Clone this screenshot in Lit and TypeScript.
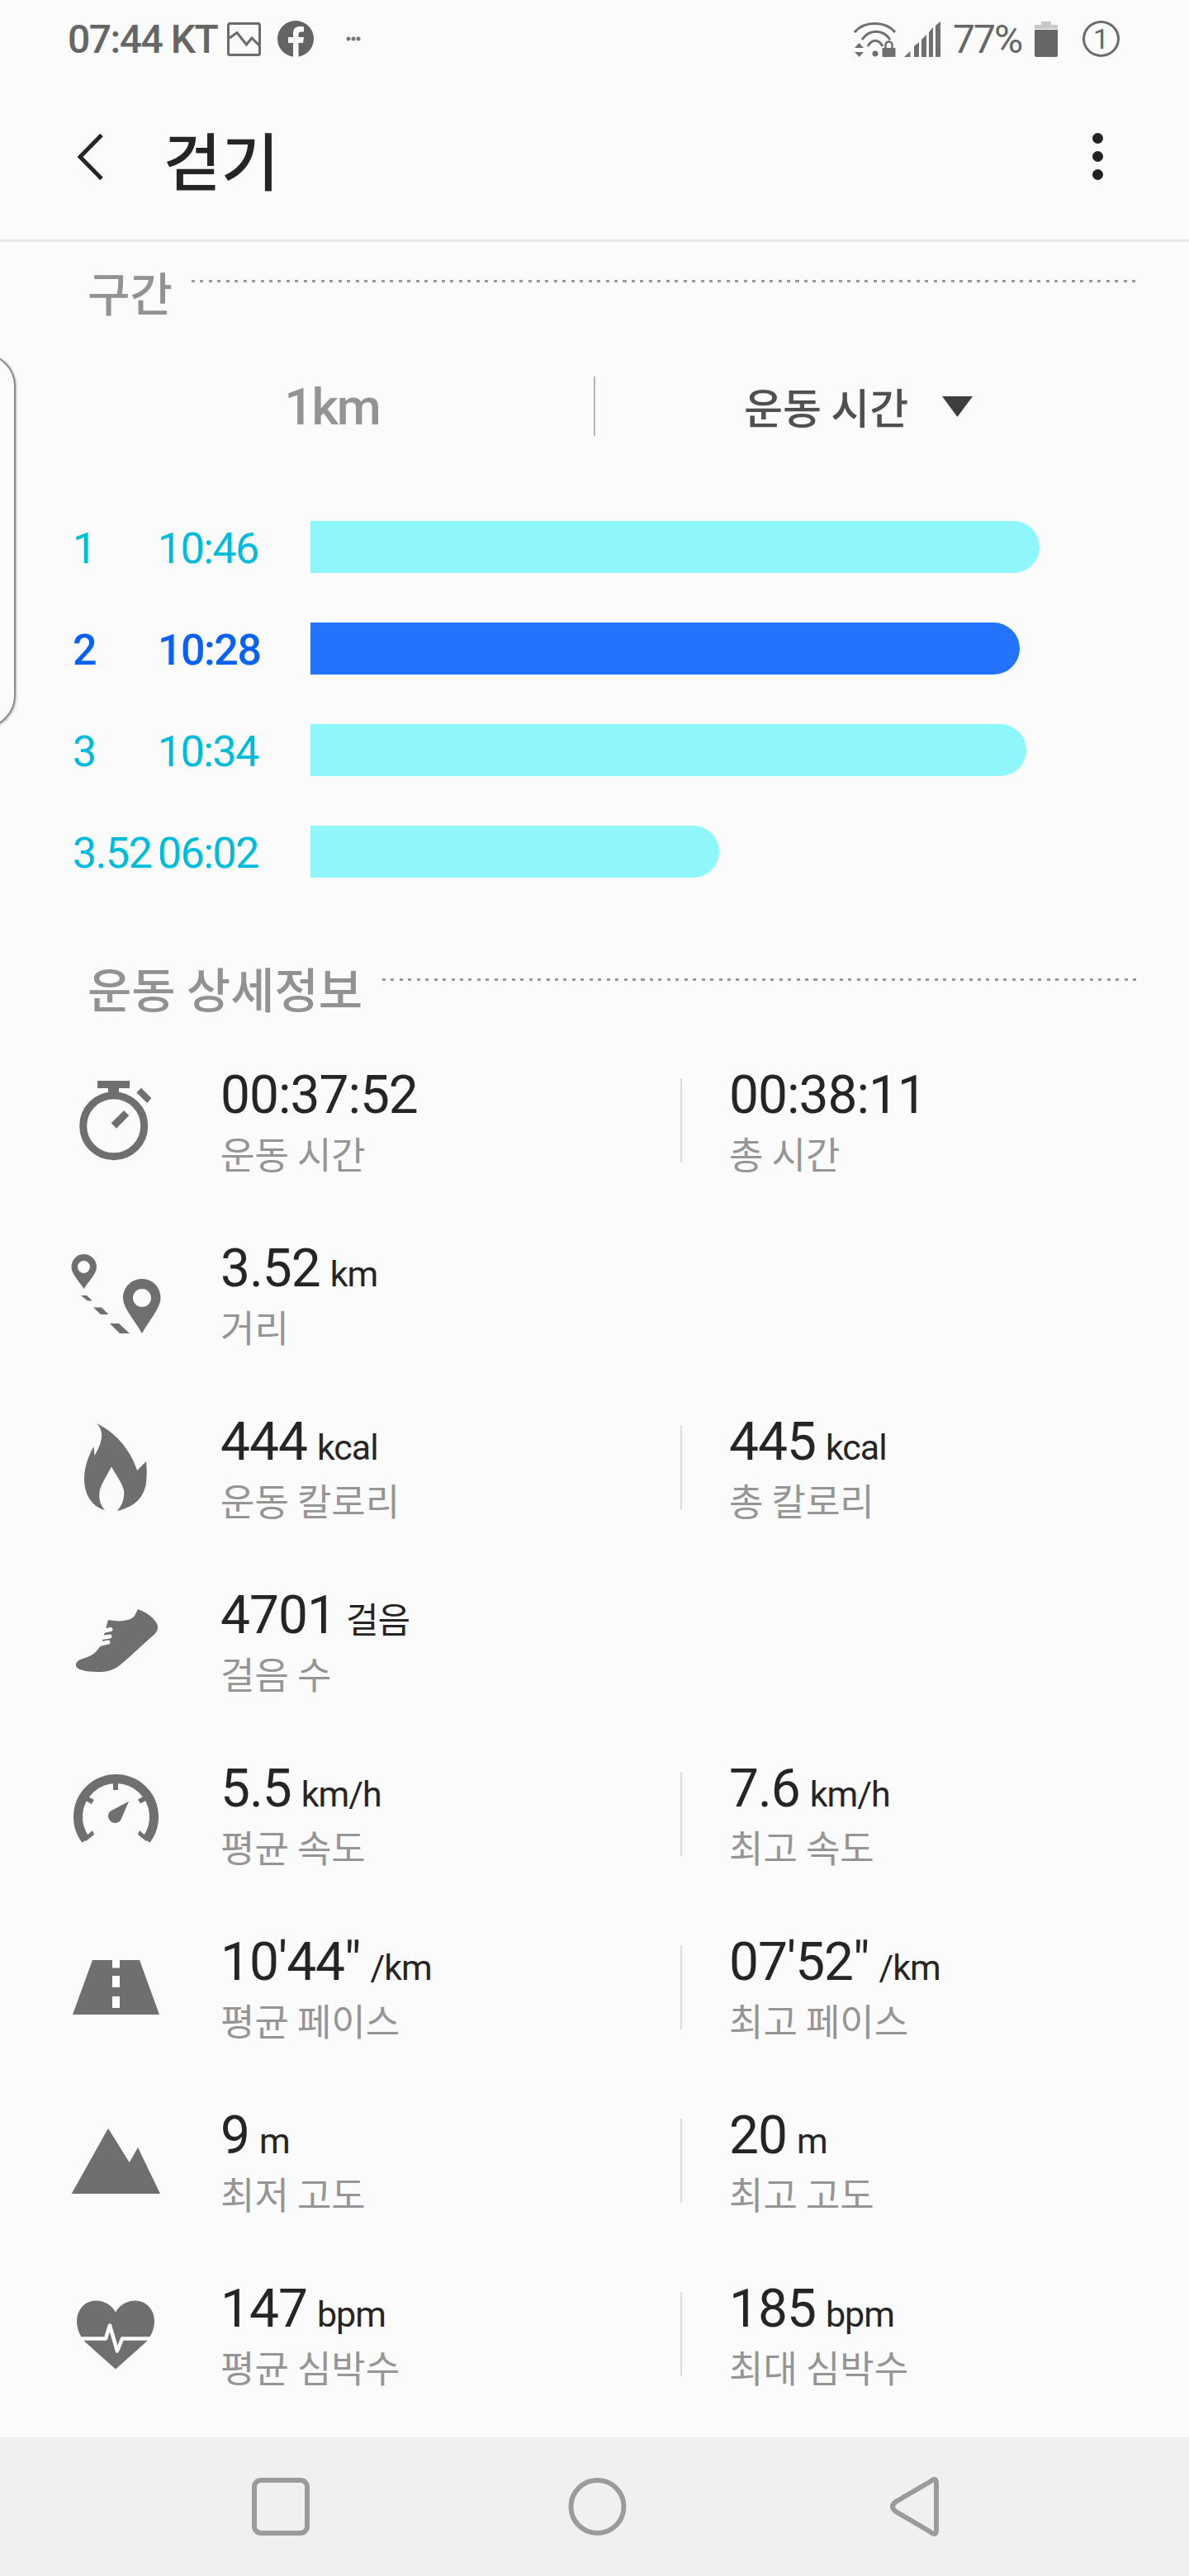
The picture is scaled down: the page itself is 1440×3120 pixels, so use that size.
import { LitElement, html, css, svg } from "lit";
import { customElement } from "lit/decorators.js";

const icons = [
  // stopwatch
  svg`<circle cx="77.7" cy="82.7" r="37" fill="none" stroke="#6f6f6f" stroke-width="9"/><rect x="58" y="28" width="39" height="9"/><rect x="71" y="36" width="13" height="10"/><polygon points="111,36.7 123.3,49 118.3,55 105.3,42.3"/><polygon points="90,64 96.3,70 81,85.7 74.7,79.3"/>`,
  // distance
  svg`<g transform="translate(0,9.5)"><path fill-rule="evenodd" d="M41.500 18C33 18 26.500 25 26.500 33.500C26.500 42 36 51 41.500 60C47 51 57 42 57 33.500C57 25 50 18 41.500 18ZM41.500 26A7.500 7.500 0 1 1 41.500 41A7.500 7.500 0 1 1 41.500 26Z"/><path fill-rule="evenodd" d="M112 48C99 48 89 58 89 71C89 83 103 98 112 114C121 98 134.500 83 134.500 71C134.500 58 125 48 112 48ZM112 60A11 11 0 1 1 112 82A11 11 0 1 1 112 60Z"/><polygon points="38,68 45,68 52,74.500 46,74.500"/><polygon points="53,82.500 63,82.500 71.500,91 62,91"/><polygon points="73,102 84,102 97,114 85,114"/></g>`,
  // flame
  svg`<path transform="translate(0,-1)" fill-rule="evenodd" d="M57 23C66 31 65 45 54.500 62L53.500 51C47 62 42 76 42 90C42 110 52 124 67 128C60 120 59.500 112 61 103C64 94 70 85 75 75.500C80 85 87 93 90 104C91 112 89 121 82 129C100 125 113 115 116.500 98C118 88 118 79 117 69L106 80C100 60 84 36 57 23Z"/>`,
  // shoe
  svg`<g transform="translate(0,-11.500)"><path d="M107 48C118 52 128 59 131 68C132 74 128 78 123 82C112 92 102 101 91 111C82 119 74 124 62 124C50 124 36 123 32.500 118C30 112 36 109 43 107C53 104 59 98 63 90L71 61C78 62 84 63 90 62C95 61 100 60 103 56Z"/><g stroke="#fbfbfb" stroke-width="5" stroke-linecap="round" fill="none"><path d="M62 75L74 72.500"/><path d="M60 83L73 81"/><path d="M58 91L71 88"/></g></g>`,
  // speedometer
  svg`<g transform="translate(0,0)"><path d="M44 105.500A46 46 0 1 1 117 105.500" fill="none" stroke="#6f6f6f" stroke-width="11"/><rect x="77" y="35" width="6" height="10"/><rect x="44" y="54" width="9" height="6" transform="rotate(30 48 57)"/><rect x="108" y="54" width="9" height="6" transform="rotate(-30 112 57)"/><polygon points="41,104 52,94 54,99 44,107"/><polygon points="120,104 109,94 107,99 117,107"/><path d="M96 58.700L86 82A8 8 0 1 1 73 71Z"/></g>`,
  // road
  svg`<path transform="translate(0,-202.500)" fill-rule="evenodd" d="M52 243H76V252.500H85V243H109L133 309H28ZM76 262V276H85V262ZM76 287V301H85V287Z"/>`,
  // mountain
  svg`<polygon transform="translate(0,7)" points="71,26.700 96.700,68 107,50 134,106 26.700,106"/>`,
  // heart
  svg`<g transform="translate(0,-203)"><path d="M80 249C75 240 66 235 56 235C43 235 33 246 33 260C33 268 36 277 43 285L80 318L117 285C124 277 127 268 127 260C127 246 117 235 104 235C94 235 85 240 80 249Z"/><path d="M30 281H68L73 265L82 296L88 281H130" fill="none" stroke="#fbfbfb" stroke-width="4.500" stroke-linejoin="round"/></g>`,
];

type M = [string, string, string];
const rows: { l: M; r?: M }[] = [
  { l: ["00:37:52", "", "운동 시간"], r: ["00:38:11", "", "총 시간"] },
  { l: ["3.52", "km", "거리"] },
  { l: ["444", "kcal", "운동 칼로리"], r: ["445", "kcal", "총 칼로리"] },
  { l: ["4701", "걸음", "걸음 수"] },
  { l: ["5.5", "km/h", "평균 속도"], r: ["7.6", "km/h", "최고 속도"] },
  { l: ["10'44\"", "/km", "평균 페이스"], r: ["07'52\"", "/km", "최고 페이스"] },
  { l: ["9", "m", "최저 고도"], r: ["20", "m", "최고 고도"] },
  { l: ["147", "bpm", "평균 심박수"], r: ["185", "bpm", "최대 심박수"] },
];
const laps = [
  { n: "1", t: "10:46", w: 883, on: false },
  { n: "2", t: "10:28", w: 859, on: true },
  { n: "3", t: "10:34", w: 867, on: false },
  { n: "3.52", t: "06:02", w: 495, on: false },
];

@customElement("app-root")
export class AppRoot extends LitElement {
  static styles = css`
    :host { display: block; width: 1440px; height: 3120px; overflow: hidden; background: #fbfbfb;
      font-family: "Noto Sans CJK KR", "Noto Sans", sans-serif; position: relative; }
    .page { display: flex; flex-direction: column; height: 3120px; }
    .status { height: 92px; padding: 2px 84px 0 82px; display: flex; align-items: center; color: #666; font-size: 48px; flex: none; box-sizing: border-box; font-family: "Roboto", sans-serif; font-weight: 500; }
    .status .t { letter-spacing: -1.500px; width: 182px; white-space: nowrap; }
    .status svg { display: block; flex: none; }
    .grow { flex: 1; }
    .pct { letter-spacing: -2px; margin: 0 17px 0 15px; width: 82px; white-space: nowrap; font-weight: 400; }
    .one { width: 39px; height: 38px; border: 3px solid #6b6b6b; border-radius: 50%; margin-left: 30px; display: flex; align-items: center; justify-content: center; font-size: 34px; font-weight: 400; line-height: 1; color: #666; }
    .bar { box-sizing: border-box; border-bottom: 3px solid #e9e9e9; height: 201px; display: flex; align-items: center; flex: none; padding: 0 0 3px 94px; }
    .title { font-size: 76px; font-weight: 500; color: #252525; margin-left: 73px; line-height: 1; padding-top: 4px; }
    .more { margin-left: auto; margin-right: 104px; display: flex; flex-direction: column; gap: 9px; }
    .more i { width: 13px; height: 13px; border-radius: 50%; background: #222; display: block; }
    .content { flex: 1; position: relative; min-height: 0; overflow: hidden; }
    .sec { display: flex; color: #929292; font-weight: 500; font-size: 56px; line-height: 64px; padding-left: 106px; padding-right: 62px; }
    .sec span { white-space: nowrap; }
    .sec i { flex: 1; height: 3px; margin: 18px 0 0 23px; background: repeating-linear-gradient(90deg, #999 0 4px, transparent 4px 10.450px); }
    .first { margin-top: 28px; }
    .sel { display: flex; align-items: center; height: 72px; margin-top: 71px; }
    .sel .a { width: 719px; text-align: center; color: #949494; font-size: 62px; font-weight: 500; font-family: "Roboto", sans-serif; box-sizing: border-box; padding-left: 85px; letter-spacing: -2px; }
    .sel .d { width: 2px; height: 72px; background: #b5b5b5; }
    .sel .b { margin-left: 180px; color: #505050; font-size: 51px; font-weight: 500; }
    .sel svg { margin-left: 41px; }
    .laps { padding: 103px 0 0 0; display: flex; flex-direction: column; gap: 60px; }
    .lap { display: flex; align-items: center; height: 63px; color: #00bcdc; font-size: 52px; font-family: "Roboto", sans-serif; }
    .lap.on { color: #0a62f5; font-weight: 500; }
    .lap .n { width: 103px; margin-left: 88px; white-space: nowrap; letter-spacing: -1.500px; padding-top: 4px; }
    .lap .tm { width: 185px; white-space: nowrap; letter-spacing: -1.500px; padding-top: 4px; }
    .lap .f { height: 63px; background: #8ff6fc; border-radius: 0 32px 32px 0; }
    .lap.on .f { background: #2373fc; }
    .detail { margin-top: 101px; font-size: 58px; }
    .detail i { margin-top: 21px; margin-left: 24px; }
    .list { margin-top: 53px; }
    .row { height: 210px; display: flex; }
    .row svg { margin-left: 60px; width: 200px; height: 210px; flex: none; fill: #6f6f6f; overflow: visible; }
    .m { width: 564px; box-sizing: border-box; padding: 6px 0 0 7px; flex: none; }
    .v { color: #252525; font-size: 64px; line-height: 80px; height: 78px; white-space: nowrap; font-family: "Roboto", "Noto Sans CJK KR", sans-serif; letter-spacing: -1px; }
    .v small { font-size: 43px; line-height: 1; margin-left: 12px; letter-spacing: -1px; }
    .l { color: #959595; font-size: 45px; line-height: 64px; white-space: nowrap; }
    .sep { width: 2px; height: 102px; background: #dcdcdc; margin-top: 25px; flex: none; }
    .right { margin-left: 50px; }
    .nav { height: 168px; background: #f0f0f0; flex: none; display: flex; justify-content: center; align-items: center; }
    .edge { position: absolute; left: -60px; top: 428px; width: 75px; height: 450px; border: 2px solid #8b8b8b; border-radius: 50px; box-shadow: 1px 1px 3px rgba(0,0,0,.25); background: #fbfbfb; }
  `;

  private metric(m: M) {
    return html`<div class="v">${m[0]}${m[1] ? html`<small>${m[1]}</small>` : ""}</div><div class="l">${m[2]}</div>`;
  }

  render() {
    return html`<div class="page">
      <div class="status">
        <span class="t">07:44 KT</span>
        <svg width="41" height="41" viewBox="0 0 41 41" fill="none" style="margin-left:11px"><rect x="1.500" y="1.500" width="38" height="38" rx="2" stroke="#6b6b6b" stroke-width="3"/><path d="M3 19L12 12.500L23.500 27L30 19L40 29" stroke="#6b6b6b" stroke-width="3"/></svg>
        <svg width="44" height="44" viewBox="0 0 44 44" style="margin-left:20px"><circle cx="22" cy="22" r="22" fill="#646464"/><path d="M19 44V27H13V20H19V15C19 9 23 7 27 7C29 7 31 7 32 7.500V13.500H29C26.500 13.500 25.500 15 25.500 17V20H32L31 27H25.500V44Z" fill="#fbfbfb"/></svg>
        <svg width="18" height="6" viewBox="0 0 18 6" style="margin-left:39px" fill="#777"><circle cx="3" cy="3" r="2.500"/><circle cx="9" cy="3" r="2.500"/><circle cx="15" cy="3" r="2.500"/></svg>
        <div class="grow"></div>
        <svg width="51" height="43" viewBox="0 0 51 43" fill="none" stroke="#6f6f6f" stroke-width="3"><path d="M1 13C13 -1 38 -1 50 13"/><path d="M10 22C19 9 35 9 44 22"/><path d="M17 30C22 21 30 21 35 30"/><circle cx="26" cy="39" r="3.500" fill="#6f6f6f" stroke="none"/><path d="M1 32H12L6.500 26ZM1 37H12L6.500 43Z" fill="#6f6f6f" stroke="none"/><rect x="34.500" y="32" width="16" height="11" rx="1" fill="#6f6f6f" stroke="none"/><path d="M38.500 33V28.500C38.500 23 46.500 23 46.500 28.500V33" stroke-width="2.500"/></svg>
        <svg width="44" height="43" viewBox="0 0 44 43" fill="#6f6f6f" style="margin-left:10px"><polygon points="0,43 7.500,36 7.500,43"/><polygon points="12,43 12,30 18,25 18,43"/><polygon points="21,43 21,22 27,16 27,43"/><polygon points="30,43 30,13 35,7 35,43"/><polygon points="38,43 38,5 44,0 44,43"/></svg>
        <span class="pct">77%</span>
        <svg width="28" height="43" viewBox="0 0 28 43"><rect x="8" y="0" width="12" height="5" fill="#c9c9c9"/><rect x="0" y="4" width="28" height="5" fill="#c9c9c9"/><path d="M0 10H28V41Q28 43 26 43H2Q0 43 0 41Z" fill="#666"/></svg>
        <span class="one">1</span>
      </div>
      <div class="bar">
        <svg width="31" height="56" viewBox="0 0 31 56" fill="none"><path d="M29 1.500L3 28L29 54.500" stroke="#252525" stroke-width="5"/></svg>
        <div class="title">걷기</div>
        <div class="more"><i></i><i></i><i></i></div>
      </div>
      <div class="content">
        <div class="sec first"><span>구간</span><i></i></div>
        <div class="sel"><div class="a">1km</div><div class="d"></div><div class="b">운동 시간</div><svg width="37" height="25" viewBox="0 0 37 25"><polygon points="0,0 37,0 18.500,25" fill="#3e3e3e"/></svg></div>
        <div class="laps">
          ${laps.map(l => html`<div class="lap ${l.on ? "on" : ""}"><span class="n">${l.n}</span><span class="tm">${l.t}</span><div class="f" style="width:${l.w}px"></div></div>`)}
        </div>
        <div class="detail sec"><span>운동 상세정보</span><i></i></div>
        <div class="list">
          ${rows.map((r, i) => html`<div class="row"><svg viewBox="0 0 200 210"><g transform="translate(0,${i * 0.5})">${icons[i]}</g></svg>
            <div class="m">${this.metric(r.l)}</div>
            ${r.r ? html`<div class="sep"></div><div class="m right">${this.metric(r.r)}</div>` : ""}
          </div>`)}
        </div>
      </div>
      <div class="nav">
        <svg width="1000" height="168" viewBox="0 0 1000 168" fill="none" stroke="#9b9b9b" stroke-width="6"><rect x="88" y="52" width="64" height="64" rx="8"/><circle cx="503.500" cy="84" r="32"/><path d="M914 56Q914 47 906 54L865 78Q857 84 865 90L906 114Q914 121 914 112Z" stroke-linejoin="round"/></svg>
      </div>
    </div>
    <div class="edge"></div>`;
  }
}
